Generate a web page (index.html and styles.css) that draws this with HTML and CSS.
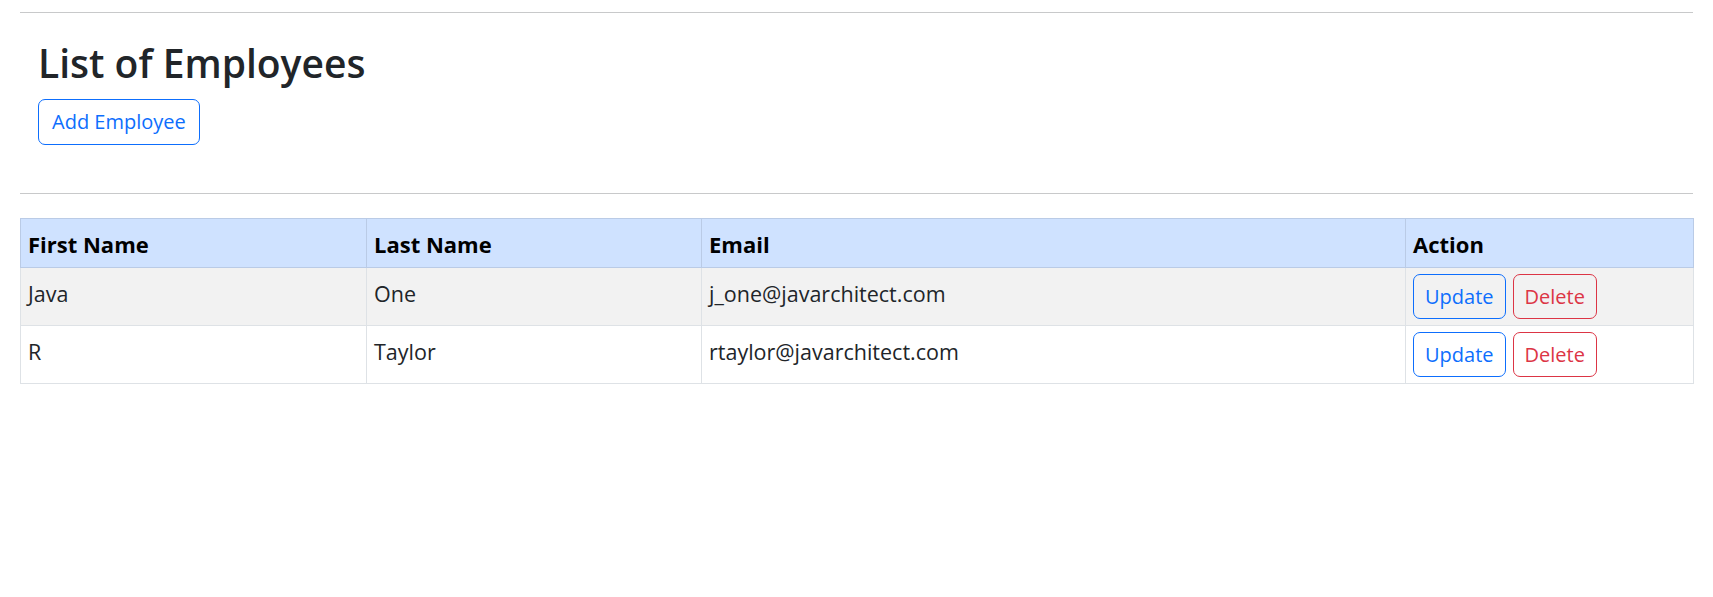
FILE: index.html
```html
<!DOCTYPE html>
<html lang="en">
<head>
<meta charset="utf-8">
<title>Employees</title>
<link rel="stylesheet" href="styles.css">
</head>
<body>
<div class="page">
  <hr class="rule rule-top">
  <div class="heading">
    <h2 class="title">List of Employees</h2>
    <button class="btn btn-blue btn-add" type="button">Add Employee</button>
  </div>
  <hr class="rule rule-mid">
  <table class="grid">
    <colgroup>
      <col class="c1"><col class="c2"><col class="c3"><col class="c4">
    </colgroup>
    <thead>
      <tr><th>First Name</th><th>Last Name</th><th>Email</th><th>Action</th></tr>
    </thead>
    <tbody>
      <tr class="odd">
        <td>Java</td><td>One</td><td>j_one@javarchitect.com</td>
        <td><div class="actions"><button class="btn btn-blue" type="button">Update</button><button class="btn btn-red" type="button">Delete</button></div></td>
      </tr>
      <tr>
        <td>R</td><td>Taylor</td><td>rtaylor@javarchitect.com</td>
        <td><div class="actions"><button class="btn btn-blue" type="button">Update</button><button class="btn btn-red" type="button">Delete</button></div></td>
      </tr>
    </tbody>
  </table>
</div>
</body>
</html>
```

FILE: styles.css
```css
html, body {
  margin: 0;
  padding: 0;
  background: #fff;
}
body {
  font-family: "Open Sans", "Noto Sans", sans-serif;
  font-size: 21.5px;
  color: #212529;
}
.page {
  padding: 12px 20px 0 20px;
}
.rule {
  border: 0;
  border-top: 1px solid #c8c9ca;
  margin: 0;
  height: 0;
}
.heading {
  padding: 23px 18px 0 18px;
}
.title {
  margin: 0 0 9px 0;
  font-size: 39px;
  font-weight: 600;
  line-height: 54px;
  color: #212529;
}
.btn {
  font-family: inherit;
  font-size: 20px;
  line-height: 31px;
  background: transparent;
  border-radius: 7px;
  border: 1px solid;
  padding: 6px 11px;
  cursor: pointer;
}
.btn-blue { color: #0d6efd; border-color: #0d6efd; }
.btn-red { color: #dc3545; border-color: #dc3545; }
.btn-add {
  line-height: 32px;
  padding: 6px 13px;
}
.rule-mid {
  margin-top: 48px;
}
.grid {
  margin-top: 24px;
  width: 100%;
  border-collapse: collapse;
  table-layout: fixed;
}
.c1 { width: 346px; }
.c2 { width: 335px; }
.c3 { width: 704px; }
.c4 { width: 288px; }
.grid th, .grid td {
  border: 1px solid #dee2e6;
  text-align: left;
  vertical-align: top;
}
.grid th {
  background: #cfe2ff;
  border-color: #bacbe6;
  color: #000;
  font-size: 22px;
  font-weight: 700;
  padding: 8px 7px 6px 7px;
  line-height: 34px;
}
.grid td {
  padding: 6px 7px;
  line-height: 34px;
}
.grid td:not(:last-child) {
  padding-top: 9px;
}
.grid tr.odd td {
  background: #f2f2f2;
}
.actions {
  display: flex;
  gap: 7px;
}
```
